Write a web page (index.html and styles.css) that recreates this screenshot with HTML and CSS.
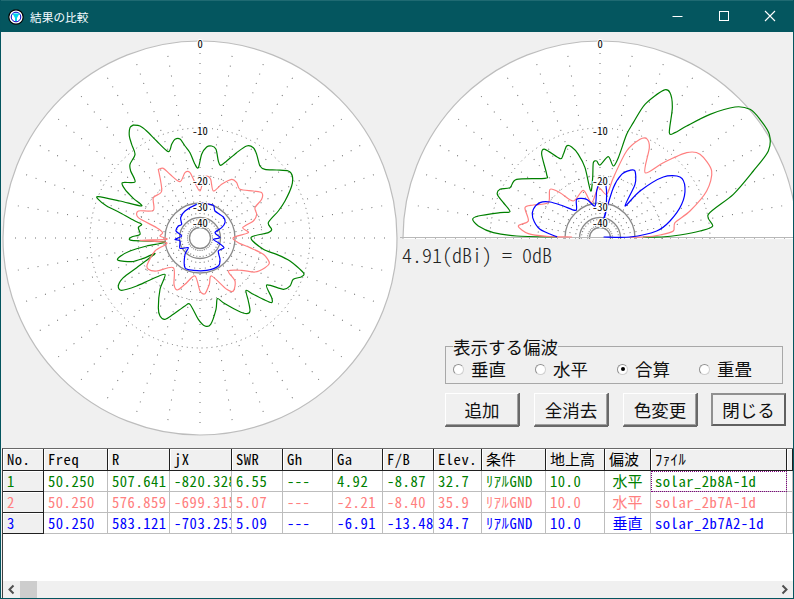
FILE: index.html
```html
<!DOCTYPE html>
<html lang="ja">
<head>
<meta charset="utf-8">
<title>結果の比較</title>
<link rel="stylesheet" href="styles.css">
</head>
<body>
<div class="window">
  <header class="titlebar">
    <svg class="app-icon" viewBox="0 0 16 16" width="16" height="16">
      <circle cx="8" cy="8" r="7.2" fill="#fff" stroke="#000" stroke-width="1.2"/>
      <circle cx="8" cy="8" r="4.8" fill="#fff" stroke="#0000c0" stroke-width="1"/>
      <path d="M4.5 4.5H11.5L9 9V12H7V9Z" fill="#00d8f0"/>
    </svg>
    <span class="title">結果の比較</span>
    <div class="caption">
      <svg width="46" height="31" viewBox="0 0 46 31"><path d="M17.5 15.5H27.5" stroke="#fff"/></svg>
      <svg width="46" height="31" viewBox="0 0 46 31"><rect x="18.5" y="10.5" width="9" height="9" fill="none" stroke="#fff"/></svg>
      <svg width="46" height="31" viewBox="0 0 46 31"><path d="M18 10L28 20M28 10L18 20" stroke="#fff" stroke-width="1.1"/></svg>
    </div>
  </header>

  <main class="upper">
    <svg class="plot-full" viewBox="0 31 400 416" width="400" height="416">
      <defs>
        <g id="spoke">
          <path class="dots-a" d="M0 -12V-60"/>
          <path class="dots-b" d="M0 -62V-110"/>
          <path class="dots-c" d="M0 -114V-190"/>
        </g>
        <g id="polar-grid">
          <circle class="disc" r="197"/>
          <use href="#spoke" transform="rotate(0)"/><use href="#spoke" transform="rotate(10)"/><use href="#spoke" transform="rotate(20)"/><use href="#spoke" transform="rotate(30)"/><use href="#spoke" transform="rotate(40)"/><use href="#spoke" transform="rotate(50)"/><use href="#spoke" transform="rotate(60)"/><use href="#spoke" transform="rotate(70)"/><use href="#spoke" transform="rotate(80)"/><use href="#spoke" transform="rotate(90)"/><use href="#spoke" transform="rotate(100)"/><use href="#spoke" transform="rotate(110)"/><use href="#spoke" transform="rotate(120)"/><use href="#spoke" transform="rotate(130)"/><use href="#spoke" transform="rotate(140)"/><use href="#spoke" transform="rotate(150)"/><use href="#spoke" transform="rotate(160)"/><use href="#spoke" transform="rotate(170)"/><use href="#spoke" transform="rotate(180)"/><use href="#spoke" transform="rotate(190)"/><use href="#spoke" transform="rotate(200)"/><use href="#spoke" transform="rotate(210)"/><use href="#spoke" transform="rotate(220)"/><use href="#spoke" transform="rotate(230)"/><use href="#spoke" transform="rotate(240)"/><use href="#spoke" transform="rotate(250)"/><use href="#spoke" transform="rotate(260)"/><use href="#spoke" transform="rotate(270)"/><use href="#spoke" transform="rotate(280)"/><use href="#spoke" transform="rotate(290)"/><use href="#spoke" transform="rotate(300)"/><use href="#spoke" transform="rotate(310)"/><use href="#spoke" transform="rotate(320)"/><use href="#spoke" transform="rotate(330)"/><use href="#spoke" transform="rotate(340)"/><use href="#spoke" transform="rotate(350)"/>
          <circle class="ring-dot" r="110"/>
          <circle class="ring-dot" r="62"/>
          <circle class="ring" r="35"/>
          <circle class="ring" r="20.5"/>
          <circle class="ring" r="10.5"/>
        </g>
        <g id="polar-labels">
          <text class="lbl" y="-190">0</text>
          <text class="lbl" y="-103">-10</text>
          <text class="lbl" y="-53">-20</text>
          <text class="lbl" y="-27">-30</text>
          <text class="lbl" y="-11">-40</text>
        </g>
      </defs>
      <use href="#polar-grid" transform="translate(200 237)"/>
      <g transform="translate(90 110) scale(0.33333)">
        <path class="green" id="left-green"/>
        <path class="red" id="left-red"/>
        <path class="blue" id="left-blue"/>
      </g>
      <use href="#polar-labels" transform="translate(200 237)"/>
    </svg>

    <section class="side">
      <svg class="plot-half" viewBox="400 31 394 207" width="394" height="207">
        <use href="#polar-grid" transform="translate(600 237)"/>
        <path class="base" d="M400 236.5H794"/>
        <g transform="translate(400 90) scale(0.33333)">
          <path class="green" id="right-green"/>
          <path class="red" id="right-red"/>
          <path class="blue" id="right-blue"/>
        </g>
        <use href="#polar-labels" transform="translate(600 237)"/>
      </svg>
      <p class="readout">4.91(dBi) = 0dB</p>
      <div class="controls">
        <fieldset class="group">
          <legend class="legend">表示する偏波</legend>
          <label class="opt"><span class="radio"></span>垂直</label>
          <label class="opt"><span class="radio"></span>水平</label>
          <label class="opt"><span class="radio on"></span>合算</label>
          <label class="opt"><span class="radio"></span>重畳</label>
        </fieldset>
        <div class="buttons">
          <button class="btn">追加</button>
          <button class="btn">全消去</button>
          <button class="btn">色変更</button>
          <button class="btn default">閉じる</button>
        </div>
      </div>
    </section>
  </main>

  <section class="table">
    <div class="row head">
      <div class="c fix">No.</div><div class="c">Freq</div><div class="c">R</div><div class="c">jX</div><div class="c">SWR</div><div class="c">Gh</div><div class="c">Ga</div><div class="c">F/B</div><div class="c">Elev.</div><div class="c jp">条件</div><div class="c jp">地上高</div><div class="c jp">偏波</div><div class="c">ﾌｧｲﾙ</div><div class="c">&nbsp;</div>
    </div>
    <div class="row green-t">
      <div class="c fix">1</div><div class="c">50.250</div><div class="c">507.641</div><div class="c">-820.328</div><div class="c">6.55</div><div class="c">---</div><div class="c">4.92</div><div class="c">-8.87</div><div class="c">32.7</div><div class="c">ﾘｱﾙGND</div><div class="c">10.0</div><div class="c jp mid">水平</div><div class="c focus">solar_2b8A-1d</div><div class="c"></div>
    </div>
    <div class="row red-t">
      <div class="c fix">2</div><div class="c">50.250</div><div class="c">576.859</div><div class="c">-699.315</div><div class="c">5.07</div><div class="c">---</div><div class="c">-2.21</div><div class="c">-8.40</div><div class="c">35.9</div><div class="c">ﾘｱﾙGND</div><div class="c">10.0</div><div class="c jp mid">水平</div><div class="c">solar_2b7A-1d</div><div class="c"></div>
    </div>
    <div class="row blue-t">
      <div class="c fix">3</div><div class="c">50.250</div><div class="c">583.121</div><div class="c">-703.253</div><div class="c">5.09</div><div class="c">---</div><div class="c">-6.91</div><div class="c">-13.48</div><div class="c">34.7</div><div class="c">ﾘｱﾙGND</div><div class="c">10.0</div><div class="c jp mid">垂直</div><div class="c">solar_2b7A2-1d</div><div class="c"></div>
    </div>
    <div class="blank"></div>
    <div class="scrollbar">
      <svg class="arrow" width="17" height="17" viewBox="0 0 17 17"><path d="M10.5 4.5L6.5 8.5L10.5 12.5" fill="none" stroke="#505050" stroke-width="2"/></svg>
      <div class="thumb"></div>
      <div class="track"></div>
      <svg class="arrow" width="17" height="17" viewBox="0 0 17 17"><path d="M6.5 4.5L10.5 8.5L6.5 12.5" fill="none" stroke="#505050" stroke-width="2"/></svg>
    </div>
  </section>
</div>
<script src="plot.js"></script>
</body>
</html>
```

FILE: styles.css
```css
* { box-sizing: border-box; }
html, body { margin: 0; padding: 0; }
body { width: 794px; height: 599px; overflow: hidden; background: #04555f; }
.window {
  width: 794px; height: 599px;
  display: flex; flex-direction: column;
  background: #f0f0f0;
  border: 1px solid #04555f;
  border-top: 0;
  font-family: "Noto Sans CJK JP", sans-serif;
  overflow: hidden;
}
.titlebar {
  flex: 0 0 31px;
  margin: 0 -1px;
  display: flex; align-items: center;
  background: #04565f;
  border-top: 1px solid #1f6a72;
  color: #fff;
  padding-left: 8px;
}
.app-icon { flex: none; }
.title { margin-left: 6px; font: 11.7px "Noto Sans CJK JP", sans-serif; color: #f4fbff; }
.caption { margin-left: auto; display: flex; margin-right: 0; height: 31px; padding-right: 1px; }
.caption svg { display: block; }

.upper { flex: 0 0 416px; display: flex; margin-left: -1px; }
.plot-full { display: block; flex: none; }
.side { flex: 1; display: flex; flex-direction: column; min-width: 0; }
.plot-half { display: block; flex: none; }

.disc { fill: #fff; stroke: #bdbdbd; stroke-width: 1.2; }
.ring-dot { fill: none; stroke: #707070; stroke-width: 1; stroke-dasharray: 1 4; }
.ring { fill: none; stroke: #8a8a8a; stroke-width: 1.3; }
.dots-a, .dots-b, .dots-c { fill: none; stroke: #707070; stroke-width: 1; }
.dots-a { stroke-dasharray: 1 5; }
.dots-b { stroke-dasharray: 1 7; }
.dots-c { stroke-dasharray: 1 9; }
.base { stroke: #b8b8b8; stroke-width: 1; fill: none; }
.green, .red, .blue { fill: none; stroke-width: 3.6; stroke-linejoin: round; stroke-linecap: round; }
.green { stroke: #008000; }
.red { stroke: #ff8080; }
.blue { stroke: #0000ff; }
.lbl {
  font: 400 10.5px "Noto Sans CJK JP", sans-serif;
  font-feature-settings: "hwid";
  text-anchor: middle;
  fill: #000;
  stroke: #fff; stroke-width: 2; paint-order: stroke;
}

.readout {
  margin: 5px 0 0 2px;
  height: 22px;
  font: 300 20px/22px "Noto Sans CJK JP", sans-serif;
  font-feature-settings: "hwid";
  color: #222;
}
.controls { margin: 72px 0 0 45px; width: 342px; }
.group {
  margin: 0;
  width: 338px; height: 46px;
  padding: 0 0 0 7px;
  border: 1px solid #a8a8a8;
  display: flex; align-items: flex-start;
  min-inline-size: 0;
}
.legend {
  padding: 0;
  margin-left: 0;
  font: 17.5px/17px "Noto Sans CJK JP", sans-serif;
  color: #111;
  height: 17px;
}
.opt {
  width: 82px;
  display: flex; align-items: center;
  font: 17.5px/22px "Noto Sans CJK JP", sans-serif;
  color: #111;
  margin-top: 3px;
}
.radio {
  width: 11px; height: 11px;
  margin-right: 7px;
  border-radius: 50%;
  background: #fff;
  border: 1px solid;
  border-color: #909090 #d0d0d0 #d0d0d0 #909090;
  flex: none;
  position: relative;
}
.radio.on::after {
  content: "";
  position: absolute; left: 2.5px; top: 2.5px;
  width: 4px; height: 4px; border-radius: 50%;
  background: #000;
}
.buttons { display: flex; gap: 15px; margin-top: 9px; }
.btn {
  width: 74px; height: 33px;
  padding: 0;
  font: 17.5px/1 "Noto Sans CJK JP", sans-serif;
  color: #111;
  background: #f0f0f0;
  border: 1px solid;
  border-color: #fff #696969 #696969 #fff;
  box-shadow: inset -1px -1px 0 #a0a0a0, 0 1px 0 #696969, 1px 0 0 #696969;
}
.btn.default {
  width: 75px; margin-left: -1px;
  border: 2px solid;
  border-color: #909090 #606060 #606060 #909090;
  box-shadow: none;
}

.table {
  flex: 1;
  margin-left: 1px;
  display: flex; flex-direction: column;
  background: #fff;
  border-top: 1px solid #696969;
  border-left: 1px solid #404040;
  min-height: 0;
}
.row {
  flex: 0 0 21px;
  display: grid;
  grid-template-columns: 41px 64px 62px 62px 51px 50px 50px 51px 48px 64px 59px 46px 136px 1fr;
  grid-template-rows: 21px;
}
.row.head { flex-basis: 22px; grid-template-rows: 22px; }
.c {
  border-right: 1px solid #bdbdbd;
  border-bottom: 1px solid #bdbdbd;
  padding-left: 4px;
  font: 400 14.6px/20px "Noto Sans CJK JP", sans-serif;
  font-feature-settings: "hwid";
  letter-spacing: 0.5px;
  white-space: nowrap;
  overflow: hidden;
}
.c.jp { font: 400 15px/20px "Noto Sans CJK JP", sans-serif; letter-spacing: 0; }
.c.jp.mid { text-align: center; padding-left: 0; }
.c.focus { outline: 1px dotted #800080; outline-offset: -1px; }
.head .c {
  background: #f0f0f0;
  color: #000;
  border-right: 1px solid #202020;
  border-bottom: 1px solid #202020;
  box-shadow: inset 1px 1px 0 #fff;
}
.c.fix {
  background: #f0f0f0;
  border-right: 1px solid #202020;
  border-bottom: 1px solid #202020;
  box-shadow: inset 1px 1px 0 #fff;
}
.green-t { color: #008000; }
.red-t { color: #ff8080; }
.blue-t { color: #0000ff; }
.blank { flex: 1; }
.scrollbar { flex: 0 0 17px; display: flex; background: #f0f0f0; }
.arrow { display: block; flex: none; }
.thumb { flex: 0 0 17px; background: #cdcdcd; }
.track { flex: 1; }
```

FILE: plot.js
```js
// Radiation-pattern traces, in thirds of a pixel within each plot group.
var TRACES = {
  "left-green": "130,42 150,45 170,60 200,90 235,122 245,100 255,85 270,84 285,105 300,125 315,160 325,170 335,130 350,108 365,105 378,115 385,150 392,163 410,150 440,125 470,105 490,110 500,130 510,165 525,175 560,177 595,180 607,195 605,225 585,270 565,300 535,335 545,355 535,365 483,380 520,415 560,430 600,450 640,485 635,497 610,505 600,525 580,535 530,522 545,560 545,575 520,565 490,550 468,538 475,570 480,600 470,608 445,600 400,575 382,563 378,595 362,640 345,645 325,625 300,580 285,585 250,610 225,625 210,615 205,590 210,535 225,490 180,507 140,525 95,538 85,525 100,500 140,470 195,428 160,442 125,452 85,448 88,438 120,420 170,405 225,393 125,388 125,378 150,370 145,350 155,340 135,330 90,305 50,285 25,265 25,257 90,270 155,285 130,262 105,235 97,215 135,213 122,180 120,160 135,130 125,100 118,75 120,50 130,42",
  "left-red": "205,175 220,172 240,190 270,212 285,185 300,185 315,215 330,240 340,205 350,195 362,205 370,240 395,220 425,205 440,215 450,235 490,240 515,245 515,265 495,290 500,310 490,330 458,350 475,365 430,380 445,395 480,410 520,430 538,455 525,470 495,483 455,478 415,480 435,510 430,540 410,535 365,495 358,520 345,548 330,540 315,495 285,520 262,537 252,520 250,470 200,480 175,475 172,460 195,420 230,395 148,388 230,385 210,375 218,365 200,350 145,320 145,300 190,298 190,260 215,240 205,175",
  "left-blue": "340,277 370,283 375,300 400,318 405,335 395,350 375,365 390,380 370,385 385,395 402,410 385,420 390,445 385,465 350,478 310,478 285,470 285,430 295,410 270,412 270,390 255,385 275,375 258,360 265,345 275,340 272,320 285,300 320,280 340,277",
  "right-green": "470,438 350,435 280,425 235,405 218,385 235,375 300,365 330,362 310,335 292,310 300,295 330,290 350,265 435,262 440,250 425,190 435,175 480,203 490,190 500,165 515,168 535,190 555,230 572,300 578,260 580,215 590,210 600,222 625,197 640,225 655,200 680,130 700,95 735,40 790,-2 810,5 817,50 808,125 825,125 860,105 930,70 1005,48 1050,55 1080,85 1108,130 1105,180 1060,240 1000,310 925,370 938,405 900,420 840,432 785,438 730,438",
  "right-red": "515,438 440,436 385,428 355,405 385,390 375,350 400,342 445,335 450,295 480,305 520,330 550,298 575,335 595,290 620,310 640,260 680,180 720,145 740,143 748,170 735,245 790,215 860,185 900,190 935,240 920,300 870,360 825,395 820,420 780,432 730,438 690,438",
  "right-blue": "470,437 420,415 398,380 400,355 420,335 450,333 490,345 528,358 530,325 560,325 585,345 590,300 600,275 618,285 618,360 612,380 640,290 665,250 690,238 705,240 705,280 675,345 720,300 790,258 840,258 855,290 845,340 810,390 770,420 690,438 612,438"
};

function smoothPath(text) {
  var p = text.split(" ").map(function (s) { return s.split(",").map(Number); });
  var d = "M" + p[0][0] + " " + p[0][1];
  for (var i = 0; i < p.length - 1; i++) {
    var a = p[Math.max(i - 1, 0)], b = p[i], c = p[i + 1], e = p[Math.min(i + 2, p.length - 1)];
    var k = 1 / 7;
    d += "C" + (b[0] + (c[0] - a[0]) * k) + " " + (b[1] + (c[1] - a[1]) * k) + " " +
         (c[0] - (e[0] - b[0]) * k) + " " + (c[1] - (e[1] - b[1]) * k) + " " + c[0] + " " + c[1];
  }
  return d;
}

Object.keys(TRACES).forEach(function (id) {
  document.getElementById(id).setAttribute("d", smoothPath(TRACES[id]));
});
```
